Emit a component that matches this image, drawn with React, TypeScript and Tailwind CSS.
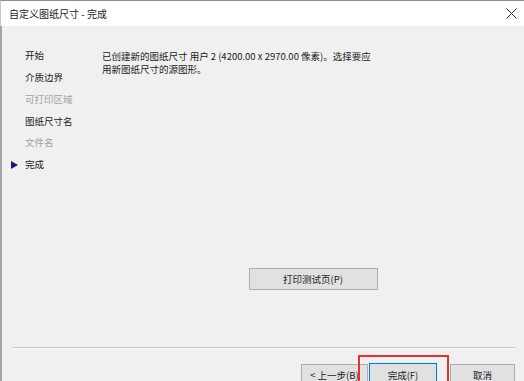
import React from "react";

const font = { fontFamily: '"Noto Sans CJK SC", "Noto Sans", sans-serif' };

function NavItem({ label, gray, active }: { label: string; gray?: boolean; active?: boolean }) {
  return (
    <div className="h-[21.8px] flex items-center relative">
      {active && (
        <svg className="absolute left-[9px] top-[7px]" width="7" height="8" viewBox="0 0 7 8">
          <polygon points="0,0 7,4 0,8" fill="#1a1a7a" />
        </svg>
      )}
      <span className={"pl-[23px] text-[9.5px] leading-none " + (gray ? "text-[#a2a2a2]" : "text-[#1a1a1a]")}>{label}</span>
    </div>
  );
}

export default function App() {
  return (
    <div className="w-[524px] h-[381px] overflow-hidden relative bg-[#f0f0f0] flex flex-col" style={font}>
      <div className="h-[26px] shrink-0 bg-white border-t border-[#8c8c8c] border-l border-l-[#c8c8c8] flex items-center justify-between pl-[8px] pr-[7px]">
        <span className="text-[10px] leading-none text-[#1b1b1b]">自定义图纸尺寸 - 完成</span>
        <svg width="11" height="11" viewBox="0 0 11 11">
          <path d="M0.5 0.5 L10.5 10.5 M10.5 0.5 L0.5 10.5" stroke="#333" strokeWidth="1" />
        </svg>
      </div>
      <div className="flex-1 flex flex-col border-l-2 border-[#a4a4a4]">
        <div className="flex h-[264px]">
          <div className="w-[100px] pt-[19px] flex flex-col">
            <NavItem label="开始" />
            <NavItem label="介质边界" />
            <NavItem label="可打印区域" gray />
            <NavItem label="图纸尺寸名" />
            <NavItem label="文件名" gray />
            <NavItem label="完成" active />
          </div>
          <div className="flex-1 flex flex-col pt-[24px]">
            <div className="text-[9.5px] leading-[13px] text-[#1a1a1a]">
              <div>已创建新的图纸尺寸 用户 2 (4200.00 x 2970.00 像素)。选择要应</div>
              <div>用新图纸尺寸的源图形。</div>
            </div>
            <div className="flex justify-center mt-[192px]">
              <div className="w-[129px] h-[22px] bg-[#e1e1e1] border border-[#adadad] flex items-center justify-center text-[9.5px] text-[#1a1a1a]">
                打印测试页(P)
              </div>
            </div>
          </div>
        </div>
        <div className="mt-[57px] ml-[10px] mr-[9px] h-[2px] border-t border-[#c6c6c6] bg-[#fbfbfb]" />
        <div className="mt-[15px] flex justify-end pr-[9px] items-start">
          <div className="w-[67px] h-[23px] bg-[#e1e1e1] border border-[#adadad] flex items-center justify-center text-[9.5px] text-[#1a1a1a] whitespace-nowrap">
            &lt; 上一步(B)
          </div>
          <div className="ml-[1px] -mt-[1px] w-[68px] h-[24px] bg-[#e1e1e1] border border-[#0078d7] flex items-center justify-center text-[9.5px] text-[#1a1a1a]">
            完成(F)
          </div>
          <div className="ml-[13px] w-[65px] h-[23px] bg-[#e1e1e1] border border-[#adadad] flex items-center justify-center text-[9.5px] text-[#1a1a1a]">
            取消
          </div>
        </div>
      </div>
      <div className="absolute left-[358px] top-[355px] w-[91px] h-[34px] border-2 border-[#e5312f]" />
    </div>
  );
}
